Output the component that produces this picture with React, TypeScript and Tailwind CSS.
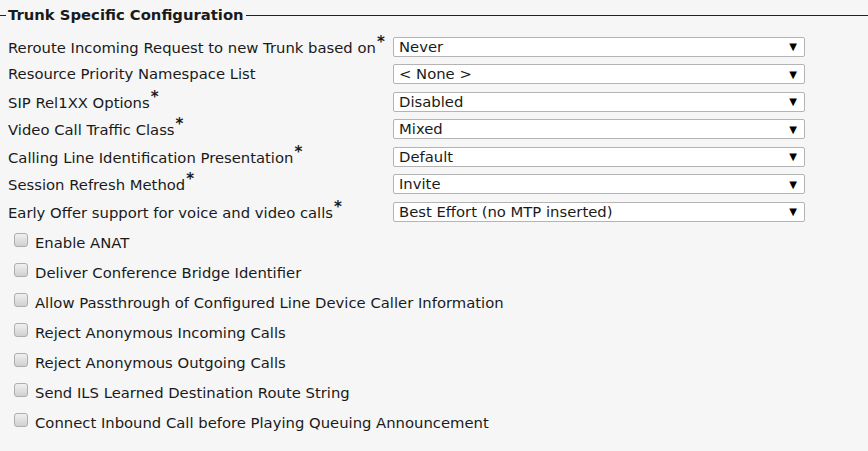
const selects = [
  { label: "Reroute Incoming Request to new Trunk based on", req: true, value: "Never" },
  { label: "Resource Priority Namespace List", req: false, value: "< None >" },
  { label: "SIP Rel1XX Options", req: true, value: "Disabled" },
  { label: "Video Call Traffic Class", req: true, value: "Mixed" },
  { label: "Calling Line Identification Presentation", req: true, value: "Default" },
  { label: "Session Refresh Method", req: true, value: "Invite" },
  { label: "Early Offer support for voice and video calls", req: true, value: "Best Effort (no MTP inserted)" },
];

const checks = [
  "Enable ANAT",
  "Deliver Conference Bridge Identifier",
  "Allow Passthrough of Configured Line Device Caller Information",
  "Reject Anonymous Incoming Calls",
  "Reject Anonymous Outgoing Calls",
  "Send ILS Learned Destination Route String",
  "Connect Inbound Call before Playing Queuing Announcement",
];

export default function App() {
  return (
    <div
      className="w-[868px] h-[451px] overflow-hidden bg-[#f6f6f6] text-[#1a1a1a] text-[14.8px]"
      style={{ fontFamily: "'DejaVu Sans', Verdana, sans-serif" }}
    >
      {/* Legend */}
      <div className="flex items-center pt-[7px] h-[24px]">
        <div className="w-[6px] h-px bg-[#222]" />
        <span className="font-bold px-[2px] leading-none">Trunk Specific Configuration</span>
        <div className="flex-1 h-px bg-[#222]" />
      </div>

      {/* Selects */}
      <div className="flex flex-col pt-[9px]">
        {selects.map((s) => (
          <div key={s.label} className="flex items-center h-[27.5px]">
            <div className="w-[393px] pl-[8px] whitespace-nowrap">
              {s.label}
              {s.req && <span className="align-super text-[15px] font-bold leading-none ml-[1px]">*</span>}
            </div>
            <div className="w-[412px] h-[20px] bg-white border border-[#b4b4b4] rounded-[2px] flex items-center justify-between pl-[5px] pr-[7px]">
              <span>{s.value}</span>
              <span className="text-[10px] text-black">▼</span>
            </div>
          </div>
        ))}
      </div>

      {/* Checkboxes */}
      <div className="flex flex-col pt-[3px] pl-[14px]">
        {checks.map((c) => (
          <div key={c} className="flex items-center gap-[7px] h-[30px]">
            <div className="w-[14px] h-[14px] -mt-[8px] rounded-[3px] border border-[#aeaeae] bg-gradient-to-b from-[#f0f0f0] to-[#d0d0d0]" />
            <span>{c}</span>
          </div>
        ))}
      </div>
    </div>
  );
}
